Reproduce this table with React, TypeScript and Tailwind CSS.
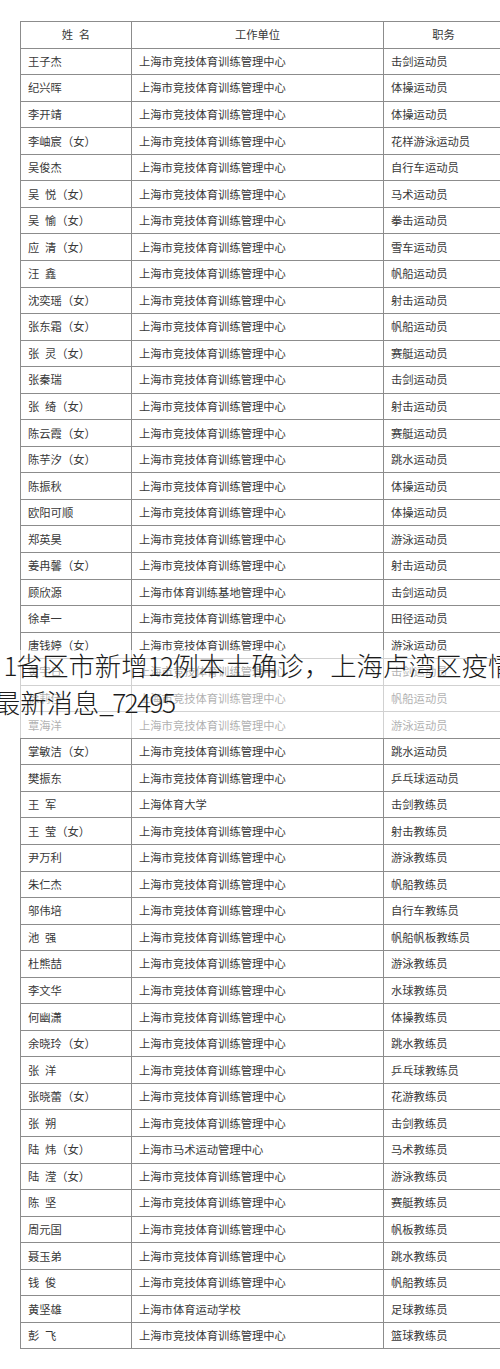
import React from "react";

type Row = [string, string, string];

const C = "上海市竞技体育训练管理中心";
const S = "\u2002";

const rows: Row[] = [
  ["王子杰", C, "击剑运动员"],
  ["纪兴晖", C, "体操运动员"],
  ["李开靖", C, "体操运动员"],
  ["李岫宸（女）", C, "花样游泳运动员"],
  ["吴俊杰", C, "自行车运动员"],
  [`吴${S}悦（女）`, C, "马术运动员"],
  [`吴${S}愉（女）`, C, "拳击运动员"],
  [`应${S}清（女）`, C, "雪车运动员"],
  [`汪${S}鑫`, C, "帆船运动员"],
  ["沈奕瑶（女）", C, "射击运动员"],
  ["张东霜（女）", C, "帆船运动员"],
  [`张${S}灵（女）`, C, "赛艇运动员"],
  ["张秦瑞", C, "击剑运动员"],
  [`张${S}绮（女）`, C, "射击运动员"],
  ["陈云霞（女）", C, "赛艇运动员"],
  ["陈芋汐（女）", C, "跳水运动员"],
  ["陈振秋", C, "体操运动员"],
  ["欧阳可顺", C, "体操运动员"],
  ["郑英昊", C, "游泳运动员"],
  ["姜冉馨（女）", C, "射击运动员"],
  ["顾欣源", "上海市体育训练基地管理中心", "击剑运动员"],
  ["徐卓一", C, "田径运动员"],
  ["唐钱婷（女）", C, "游泳运动员"],
  ["黄宇日", C, "击剑运动员"],
  ["徐莉佳", C, "帆船运动员"],
  ["覃海洋", C, "游泳运动员"],
  ["掌敏洁（女）", C, "跳水运动员"],
  ["樊振东", C, "乒乓球运动员"],
  [`王${S}军`, "上海体育大学", "击剑教练员"],
  [`王${S}莹（女）`, C, "射击教练员"],
  ["尹万利", C, "游泳教练员"],
  ["朱仁杰", C, "帆船教练员"],
  ["邬伟培", C, "自行车教练员"],
  [`池${S}强`, C, "帆船帆板教练员"],
  ["杜熊喆", C, "游泳教练员"],
  ["李文华", C, "水球教练员"],
  ["何幽潇", C, "体操教练员"],
  ["余晓玲（女）", C, "跳水教练员"],
  [`张${S}洋`, C, "乒乓球教练员"],
  ["张晓蕾（女）", C, "花游教练员"],
  [`张${S}朔`, C, "击剑教练员"],
  [`陆${S}炜（女）`, "上海市马术运动管理中心", "马术教练员"],
  [`陆${S}滢（女）`, C, "游泳教练员"],
  [`陈${S}坚`, C, "赛艇教练员"],
  ["周元国", C, "帆板教练员"],
  ["聂玉弟", C, "跳水教练员"],
  [`钱${S}俊`, C, "帆船教练员"],
  ["黄坚雄", "上海市体育运动学校", "足球教练员"],
  [`彭${S}飞`, C, "篮球教练员"],
];

const font = {
  fontFamily: '"Noto Sans CJK SC", "Noto Sans", sans-serif',
};

const cellBase =
  "flex items-center border-r border-b border-[#8c8c8c] whitespace-nowrap";

export default function App() {
  return (
    <div
      className="relative w-[500px] h-[1369px] overflow-hidden bg-white text-[#383838]"
      style={font}
    >
      <div className="pt-[21px] pl-[20px]">
        <div className="w-[483px] border-l border-t border-[#8c8c8c] text-[11.3px]">
          <div className="grid grid-cols-[111px_252px_120px] h-[26.6px]">
            <div className={`${cellBase} justify-center`}>姓{S}名</div>
            <div className={`${cellBase} justify-center`}>工作单位</div>
            <div className={`${cellBase} justify-center`}>职务</div>
          </div>
          {rows.map((r, i) => (
            <div
              key={i}
              className="grid grid-cols-[111px_252px_120px] h-[26.56px]"
            >
              <div className={`${cellBase} pl-[7px]`}>{r[0]}</div>
              <div className={`${cellBase} pl-[7px]`}>{r[1]}</div>
              <div className={`${cellBase} pl-[7px]`}>{r[2]}</div>
            </div>
          ))}
        </div>
      </div>

      <div className="absolute left-0 right-0 top-[650px] h-[88px] bg-white/60 text-[#1c1c1c] text-[26.3px] font-light leading-[37px] whitespace-nowrap">
        <div className="-mt-[4px]">
          <div className="ml-[-15px]">
            <span className="tracking-[4.4px]">3</span>
            <span className="tracking-[-1.6px]">1</span>
            省区市新增
            <span className="tracking-[-1.6px]">12</span>
            例本土确诊，上海卢湾区疫情
          </div>
          <div className="ml-[-6px]">
            最新消息<span className="tracking-[-1.6px]">_72495</span>
          </div>
        </div>
      </div>
    </div>
  );
}
